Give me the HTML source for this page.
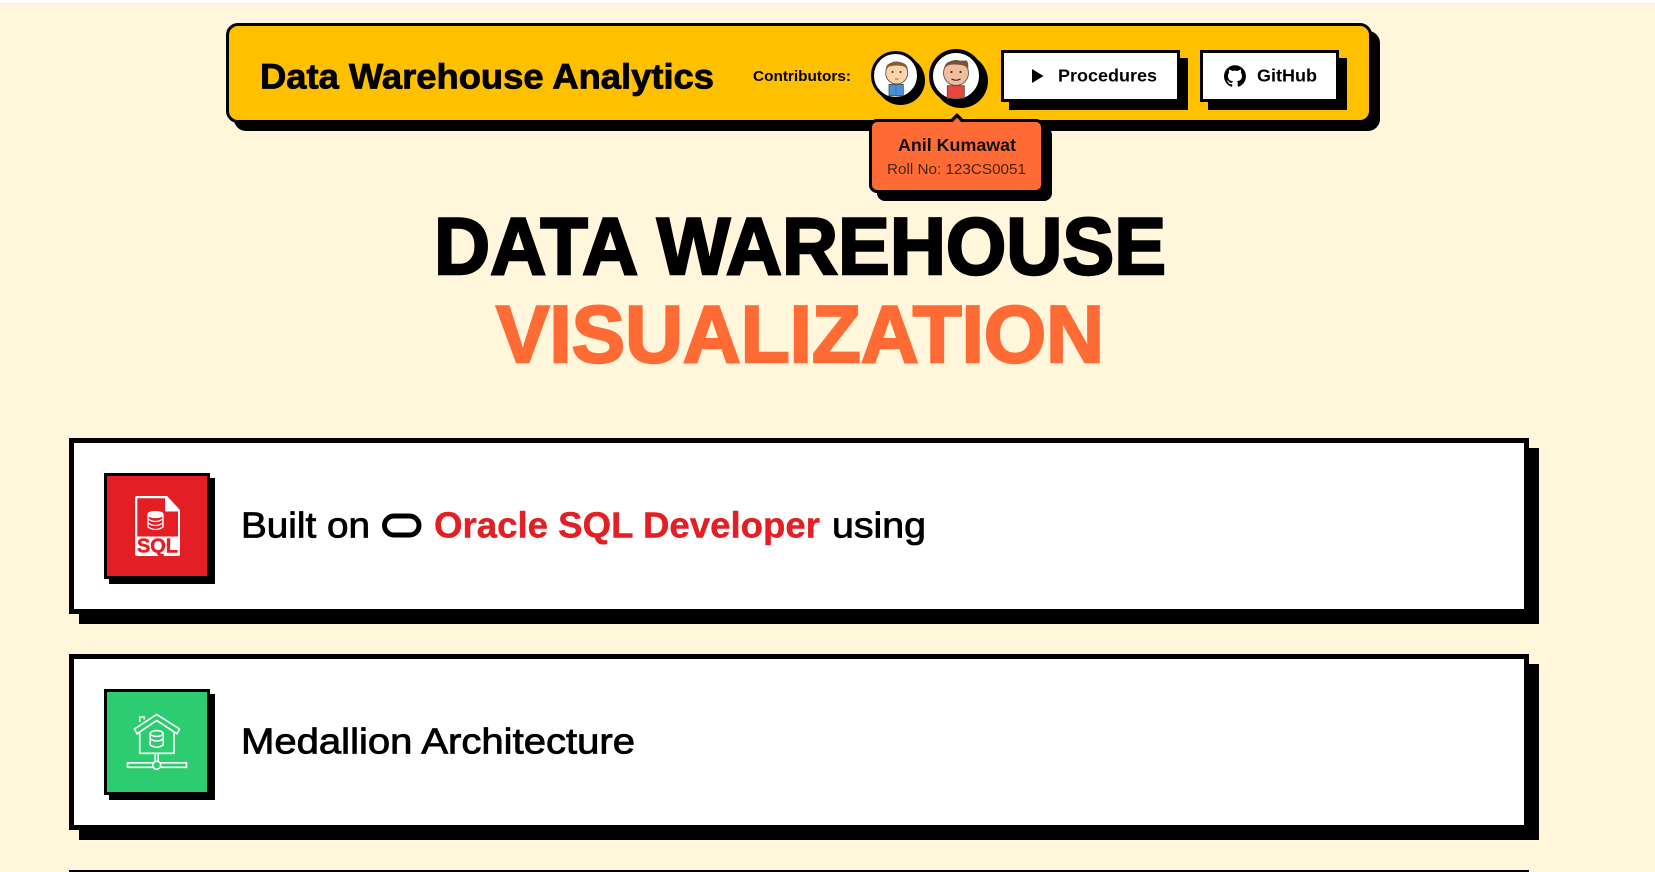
<!DOCTYPE html>
<html>
<head>
<meta charset="utf-8">
<style>
html,body{margin:0;padding:0;width:1655px;height:872px;overflow:hidden;background:#FFF6DC;}
body{position:relative;font-family:"Liberation Sans",sans-serif;}
.b{position:absolute;box-sizing:border-box;}
svg{position:absolute;left:0;top:0;}
text{font-family:"Liberation Sans",sans-serif;}
.bd{font-weight:700;}
</style>
</head>
<body>
<div class="b" style="left:0;top:0;width:1655px;height:4px;background:#fff;border-bottom:1px solid #f6e6e6;"></div>

<div class="b" style="left:226px;top:23px;width:1146px;height:100px;background:#FFC000;border:3px solid #000;border-radius:12px;box-shadow:8px 8px 0 #000;"></div>

<div class="b" style="left:1001px;top:50px;width:179px;height:52px;background:#fff;border:3px solid #000;box-shadow:8px 8px 0 #000;"></div>
<div class="b" style="left:1200px;top:50px;width:139px;height:52px;background:#fff;border:3px solid #000;box-shadow:8px 8px 0 #000;"></div>

<div class="b" style="left:871px;top:51px;width:49px;height:49px;background:#fff;border:3.5px solid #000;border-radius:50%;box-shadow:5px 5px 0 #000;"></div>
<div class="b" style="left:929px;top:49px;width:54px;height:54px;background:#fff;border:4px solid #000;border-radius:50%;box-shadow:5px 5px 0 #000;"></div>

<div class="b" style="left:869px;top:119px;width:175px;height:74px;background:#FF6B35;border:3px solid #000;border-radius:8px;box-shadow:8px 8px 0 #000;"></div>

<div class="b" style="left:69px;top:438px;width:1460px;height:176px;background:#fff;border:5px solid #000;box-shadow:10px 10px 0 #000;"></div>
<div class="b" style="left:69px;top:654px;width:1460px;height:176px;background:#fff;border:5px solid #000;box-shadow:10px 10px 0 #000;"></div>
<div class="b" style="left:69px;top:870px;width:1460px;height:2px;background:#000;"></div>

<div class="b" style="left:104px;top:473px;width:106px;height:106px;background:#E31E24;border:3px solid #000;box-shadow:5px 5px 0 #000;"></div>
<div class="b" style="left:104px;top:689px;width:106px;height:106px;background:#2ECC71;border:3px solid #000;box-shadow:5px 5px 0 #000;"></div>

<svg width="1655" height="872" viewBox="0 0 1655 872" xmlns="http://www.w3.org/2000/svg">
  <!-- nav text -->
  <text class="bd" x="260" y="88.600" font-size="35.500" textLength="454" lengthAdjust="spacingAndGlyphs" fill="#000" stroke="#000" stroke-width=".8">Data Warehouse Analytics</text>
  <text class="bd" x="753" y="81" font-size="14.500" textLength="98" lengthAdjust="spacingAndGlyphs" fill="#000">Contributors:</text>
  <text class="bd" x="1058" y="81.500" font-size="17.500" textLength="99" lengthAdjust="spacingAndGlyphs" fill="#000">Procedures</text>
  <text class="bd" x="1257" y="81.500" font-size="17.500" textLength="60" lengthAdjust="spacingAndGlyphs" fill="#000">GitHub</text>

  <!-- play -->
  <path d="M1032 69 L1043.500 76 L1032 83 Z" fill="#000"/>
  <!-- github -->
  <g transform="translate(1224,65) scale(0.9167)">
    <path fill="#000" d="M12 .3a12 12 0 0 0-3.800 23.380c.6.12.83-.26.83-.57l-.02-2.230c-3.340.73-4.040-1.420-4.040-1.420-.55-1.390-1.340-1.760-1.340-1.760-1.090-.74.08-.73.08-.73 1.200.09 1.840 1.240 1.840 1.240 1.070 1.830 2.810 1.300 3.500 1 .1-.78.42-1.310.76-1.610-2.670-.3-5.470-1.330-5.470-5.930 0-1.310.47-2.380 1.240-3.220-.14-.3-.54-1.520.1-3.180 0 0 1-.32 3.300 1.230a11.500 11.500 0 0 1 6 0c2.280-1.550 3.290-1.230 3.290-1.230.64 1.660.24 2.880.12 3.180a4.650 4.650 0 0 1 1.230 3.220c0 4.610-2.800 5.630-5.480 5.920.42.36.81 1.100.81 2.220l-.01 3.290c0 .31.2.69.82.57A12 12 0 0 0 12 .3Z"/>
  </g>

  <!-- avatar 1 -->
  <rect x="889" y="84.300" width="14.300" height="11.500" fill="#4A90D9" stroke="#444" stroke-width=".8"/>
  <line x1="896" y1="84.300" x2="896" y2="95.800" stroke="#2d6cb0" stroke-width=".8"/>
  <circle cx="896.700" cy="73" r="11" fill="#FDD5A8" stroke="#555" stroke-width=".9"/>
  <path d="M885.700 71 Q885 62 896.700 62 Q908.400 62 907.700 71 Q906.500 66.500 902 66 Q896.700 65 891.500 66 Q887 66.500 885.700 71 Z" fill="#8B5A33"/>
  <circle cx="892.500" cy="72" r="1" fill="#333"/><circle cx="900.500" cy="72" r="1" fill="#333"/>
  <path d="M895 79 H898.500" stroke="#7a4a30" stroke-width=".8"/>

  <!-- avatar 2 -->
  <rect x="947.300" y="85.700" width="17" height="12.600" fill="#E8473F" stroke="#444" stroke-width=".8"/>
  <circle cx="956" cy="73" r="12.500" fill="#F0BE9C" stroke="#555" stroke-width=".9"/>
  <path d="M944 70 Q944 60.500 956 60.800 L967 60.500 Q969 65 968 70 Q966.500 65.500 961 65 Q953 64 949 65 Q945.500 66 944 70 Z" fill="#7A5238"/>
  <circle cx="951.500" cy="72" r="1.100" fill="#333"/><circle cx="960.500" cy="72" r="1.100" fill="#333"/>
  <path d="M951.500 79 Q956 81.500 960.500 79" fill="none" stroke="#222" stroke-width="1.100"/>

  <!-- tooltip arrow -->
  <path d="M950 120 L957 113 L964 120 Z" fill="#000"/>
  <path d="M952.500 122.500 L957 117.500 L961.500 122.500 Z" fill="#FF6B35"/>
  <text class="bd" x="898" y="151" font-size="17.500" textLength="118" lengthAdjust="spacingAndGlyphs" fill="#111">Anil Kumawat</text>
  <text x="887" y="174" font-size="15" textLength="139" lengthAdjust="spacingAndGlyphs" fill="#4a2414">Roll No: 123CS0051</text>

  <!-- title -->
  <text class="bd" x="434" y="274" font-size="81" textLength="732" lengthAdjust="spacingAndGlyphs" fill="#000" stroke="#000" stroke-width="2.400">DATA WAREHOUSE</text>
  <text class="bd" x="496" y="362" font-size="81" textLength="608" lengthAdjust="spacingAndGlyphs" fill="#FF6B35" stroke="#FF6B35" stroke-width="2.400">VISUALIZATION</text>

  <!-- card 1 text -->
  <text x="241" y="537.500" font-size="36" textLength="129" lengthAdjust="spacingAndGlyphs" fill="#000" stroke="#000" stroke-width=".8">Built on</text>
  <rect x="384.500" y="516" width="34.500" height="19" rx="9.500" fill="none" stroke="#000" stroke-width="5"/>
  <text class="bd" x="434" y="537.500" font-size="36" textLength="386" lengthAdjust="spacingAndGlyphs" fill="#E31E24" stroke="#E31E24" stroke-width=".4">Oracle SQL Developer</text>
  <text x="832" y="537.500" font-size="36" textLength="94" lengthAdjust="spacingAndGlyphs" fill="#000" stroke="#000" stroke-width=".8">using</text>

  <!-- card 2 text -->
  <text x="241" y="753.500" font-size="36" textLength="394" lengthAdjust="spacingAndGlyphs" fill="#000" stroke="#000" stroke-width=".8">Medallion Architecture</text>

  <!-- SQL icon -->
  <path fill="#fff" d="M135 498 q0-2 2-2 H167 L180 510 V554 q0 2-2 2 H137 q-2 0-2-2 Z"/>
  <path fill="#E31E24" d="M137.300 498.300 H165 V511.500 H178 V536.500 H137.300 Z"/>
  <g fill="none" stroke="#fff" stroke-width="1.300">
    <ellipse cx="155.500" cy="514.500" rx="7.500" ry="3" fill="#fff"/>
    <path d="M148 514.500 V527 Q155.500 532 163 527 V514.500"/>
    <path d="M148 519 Q155.500 524 163 519"/>
    <path d="M148 523 Q155.500 528 163 523"/>
  </g>
  <text class="bd" x="137" y="552.500" font-size="20" textLength="41" lengthAdjust="spacingAndGlyphs" fill="#E31E24" stroke="#E31E24" stroke-width=".5">SQL</text>

  <!-- Medallion icon -->
  <g fill="none" stroke="#fff" stroke-width="1.600">
    <path d="M134.500 729 L156.700 714.500 L179.500 729 L177 733.800 L156.700 720.500 L137 733.800 Z"/>
    <path d="M139.700 722 V717 H144.300 V719.500"/>
    <path d="M139.700 732 V753.300 H174 V732"/>
    <ellipse cx="156.700" cy="733.500" rx="6.500" ry="2.900"/>
    <path d="M150.200 733.500 V745 Q156.700 749.500 163.200 745 V733.500"/>
    <path d="M150.200 739 Q156.700 743 163.200 739"/>
    <path d="M155.200 753.300 V761.500 M158.200 753.300 V761.500"/>
    <path d="M152.700 762.800 H127.500 V767.300 H152.700 M160.700 762.800 H186.500 V767.300 H160.700"/>
    <circle cx="156.700" cy="765.200" r="4"/>
  </g>
</svg>
</body>
</html>
